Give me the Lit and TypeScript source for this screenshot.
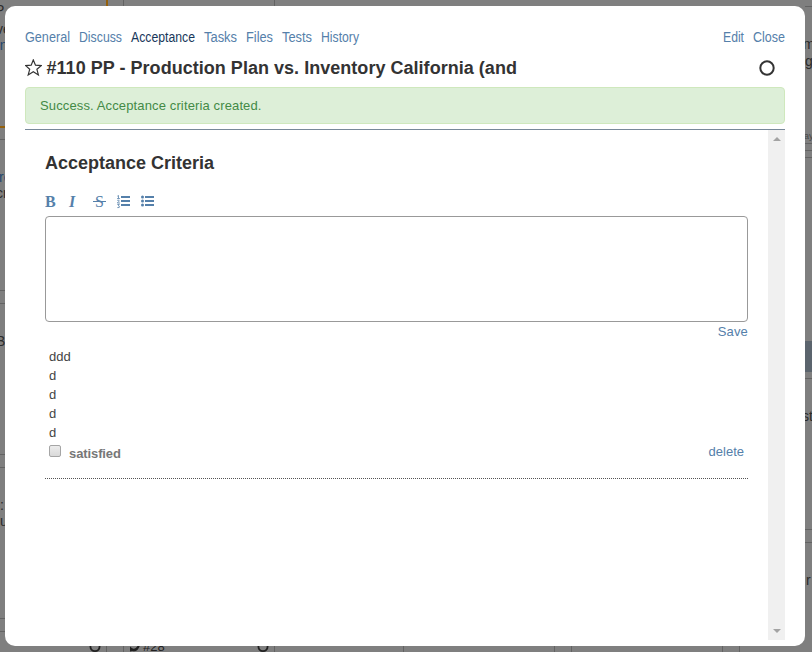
import { LitElement, html, svg, css } from "lit";
import { customElement, state } from "lit/decorators.js";

type Line = [number, number, number, number];

@customElement("board-backdrop")
class BoardBackdrop extends LitElement {
  static styles = css`
    :host { display: block; }
    svg { display: block; width: 812px; height: 652px; font-family: "Liberation Sans", Arial, sans-serif; }
    .rule { fill: #636363; }
    .dark { fill: #2b2b2b; font-size: 14px; }
    .blue { fill: #24466e; font-size: 14px; }
    .small { fill: #474747; font-size: 9px; }
    .ring { fill: none; stroke: #222; stroke-width: 1.8; }
  `;
  private rules: Line[] = [
    [123, 0, 1, 6], [274, 0, 1, 6], [805, 6, 7, 1],
    [106, 646, 1, 6], [123, 646, 1, 6], [274, 646, 1, 6], [403, 646, 1, 6],
    [554, 646, 1, 6], [571, 646, 1, 6], [722, 646, 1, 6], [739, 646, 1, 6],
    [0, 139, 5, 1], [0, 290, 5, 1], [0, 303, 5, 1], [0, 454, 5, 1],
    [0, 467, 5, 1], [0, 618, 5, 1], [0, 631, 5, 1],
    [805, 143, 7, 1], [805, 150, 7, 1], [805, 157, 7, 1], [805, 378, 7, 1],
    [805, 529, 7, 1], [805, 542, 7, 1],
  ];
  render() {
    return html`<svg viewBox="0 0 812 652" aria-hidden="true">
      <rect width="812" height="652" fill="#7f7f7f" />
      ${this.rules.map(([x, y, w, h]) => svg`<rect class="rule" x=${x} y=${y} width=${w} height=${h} />`)}
      <rect x="106" y="0" width="2" height="6" fill="#94600c" />
      <rect x="0" y="126" width="5" height="2" fill="#94600c" />
      <rect x="805" y="341" width="7" height="31" fill="#5b646d" />
      <text class="dark" x="-5" y="15">P</text>
      <text class="dark" x="-4" y="34">ve</text>
      <text class="blue" x="-5" y="50">rn</text>
      <text class="blue" x="-1" y="182">re</text>
      <text class="dark" x="-4" y="198">cr</text>
      <text class="dark" x="-4" y="346">B</text>
      <text class="dark" x="0" y="510">:</text>
      <text class="dark" x="0" y="526">u</text>
      <text class="dark" x="803" y="49">m</text>
      <text class="dark" x="805" y="66">g</text>
      <text class="small" x="804" y="139">ay</text>
      <text class="dark" x="802" y="421">st</text>
      <text class="dark" x="806" y="585">r</text>
      <circle class="ring" cx="95" cy="646.5" r="4.6" />
      <circle class="ring" cx="263" cy="646.5" r="4.6" />
      <path d="M130 651.500v-5l1.500 1.300q3.500 2.500 6-1.800h2.200q-2.200 6.500-7.500 5z" fill="#222" />
      <text x="143" y="651" fill="#222" font-size="13">#28</text>
    </svg>`;
  }
}

@customElement("editor-toolbar")
class EditorToolbar extends LitElement {
  static styles = css`
    :host { display: block; height: 14px; color: #5580aa; }
    svg { display: block; width: 112px; height: 14px; fill: currentColor; }
    text { font-family: "Liberation Serif", "Times New Roman", serif; font-size: 16px; }
    .bold { font-weight: bold; }
    .italic { font-weight: bold; font-style: italic; }
    .digits { fill: none; stroke: currentColor; stroke-width: .8; }
  `;
  render() {
    return html`<svg viewBox="0 0 112 14">
      <text class="bold" x="0" y="12">B</text>
      <text class="italic" x="24" y="12">I</text>
      <text x="50" y="12">S</text>
      <rect x="48" y="6" width="13" height="1" />
      <path class="digits" d="M72.300 1.200l1.200-.7v3M72 3.600h3M72.300 5.500q2-.9 2 .5L72.300 8H75M72.300 9.500h2l-1 1.300q2 .3.900 1.700l-1.900.1" />
      <path d="M76 1h9v2h-9zM76 5h9v2h-9zM76 9h9v2h-9z" />
      <path d="M100 1h9v2h-9zM100 5h9v2h-9zM100 9h9v2h-9z" />
      <circle cx="97.500" cy="2" r="1.500" /><circle cx="97.500" cy="6" r="1.500" /><circle cx="97.500" cy="10" r="1.500" />
    </svg>`;
  }
}

@customElement("app-root")
class AppRoot extends LitElement {
  static styles = css`
    :host {
      display: grid; width: 812px; height: 652px; overflow: hidden;
      font: 13px/19px "Liberation Sans", Arial, sans-serif; color: #333;
    }
    * { box-sizing: border-box; }
    board-backdrop, .dialog { grid-area: 1 / 1; }
    .dialog {
      z-index: 1; margin: 6px 7px 6px 5px; padding: 20px 20px 6px; border-radius: 10px;
      background: #fff; display: flex; flex-direction: column; min-width: 0;
    }
    .bar { display: flex; justify-content: space-between; height: 22px; }
    .tabs { display: flex; gap: 9px; }
    .tab { display: block; height: 22px; overflow: visible; fill: #5580aa; font-size: 15.500px; }
    .tab.on { fill: #17375a; }
    .title { display: flex; align-items: center; height: 39px; font-size: 18px; font-weight: bold; white-space: nowrap; }
    .title svg { flex: none; fill: none; stroke: #333; }
    .name { margin: 2px 0 0 4.500px; flex: 1; letter-spacing: .03px; }
    .status { margin-right: 9px; }
    .notice {
      height: 37px; padding: 8px 14px; border: 1px solid #cfe8bd; border-radius: 4px;
      background: #ddefd8; color: #438a46; letter-spacing: .13px;
    }
    .pane { margin-top: 5px; border-top: 1px solid #778899; flex: 1; display: flex; min-height: 0; }
    .content { flex: 1; padding: 21px 20px 0; }
    h2 { margin: 0; font-size: 18px; line-height: 24px; }
    editor-toolbar { margin-top: 20px; }
    textarea {
      display: block; width: 703px; height: 106px; margin: 7px 0 0; padding: 6px;
      resize: none; border: 1px solid #999; border-radius: 4px; background: #fff; font: inherit; outline: none;
    }
    .link { color: #5580aa; }
    .save { text-align: right; letter-spacing: .15px; }
    .item { margin-top: 6px; height: 132px; padding: 0 4px; border-bottom: 1px dotted #555; color: #444; }
    .foot { display: flex; height: 19px; }
    .check {
      appearance: none; width: 12px; height: 12px; margin: 3px 8px 0 0; border: 1px solid #a5a5a5;
      border-radius: 2px; background: linear-gradient(#ececec, #d9d9d9);
    }
    .label { flex: 1; margin-top: 2px; color: #777; font-weight: bold; letter-spacing: -.1px; }
    .scroll { width: 17px; background: #f0f0f0; display: flex; flex-direction: column; justify-content: space-between; align-items: center; padding: 7px 0; }
    .scroll svg { display: block; fill: #a3a3a3; }
  `;
  @state() private lines = ["ddd", "d", "d", "d", "d"];
  private tabs: [string, number][] = [
    ["General", 45], ["Discuss", 43], ["Acceptance", 64], ["Tasks", 33],
    ["Files", 27], ["Tests", 30], ["History", 38],
  ];
  private tab([name, width]: [string, number]) {
    return html`<svg class="tab ${name === "Acceptance" ? "on" : ""}" width=${width} height="22">
      <text y="16" textLength=${width} lengthAdjust="spacingAndGlyphs">${name}</text></svg>`;
  }
  render() {
    return html`<board-backdrop></board-backdrop>
      <main class="dialog">
        <header class="bar">
          <nav class="tabs">${this.tabs.map((t) => this.tab(t))}</nav>
          <nav class="tabs">${this.tab(["Edit", 21])}${this.tab(["Close", 32])}</nav>
        </header>
        <div class="title">
          <svg width="17" height="18"><path stroke-width="1.200" d="M8.300 .9l2.200 5.300 5.700.4-4.300 3.700 1.500 5.600-5.100-3.100-5.100 3.100 1.500-5.600L.6 6.600l5.600-.4z" /></svg>
          <span class="name">#110 PP - Production Plan vs. Inventory California (and</span>
          <svg class="status" width="17" height="18"><circle cx="8" cy="9" r="6.700" stroke-width="2" /></svg>
        </div>
        <div class="notice">Success. Acceptance criteria created.</div>
        <section class="pane">
          <div class="content">
            <h2>Acceptance Criteria</h2>
            <editor-toolbar></editor-toolbar>
            <textarea></textarea>
            <div class="save"><span class="link">Save</span></div>
            <div class="item">
              ${this.lines.map((l) => html`<div>${l}</div>`)}
              <div class="foot">
                <input class="check" type="checkbox" />
                <span class="label">satisfied</span>
                <span class="link">delete</span>
              </div>
            </div>
          </div>
          <div class="scroll">
            <svg width="8" height="4"><path d="M0 4L4 0l4 4z" /></svg>
            <svg width="8" height="4"><path d="M0 0l4 4 4-4z" /></svg>
          </div>
        </section>
      </main>`;
  }
}
